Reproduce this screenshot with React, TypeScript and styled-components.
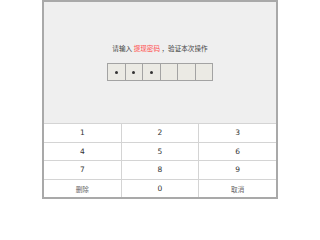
import React from "react";
import styled, { createGlobalStyle } from "styled-components";

const keys = ["1", "2", "3", "4", "5", "6", "7", "8", "9", "删除", "0", "取消"];

const App = () => {
  const filled = 3;

  return (
    <>
      <GlobalStyle />
      <StyledPanel>
        <StyledTop>
          <StyledPrompt>
            请输入 <StyledRed>提现密码</StyledRed> ，验证本次操作
          </StyledPrompt>
          <StyledBoxes>
            {[0, 1, 2, 3, 4, 5].map((i) => (
              <StyledBox key={i}>{i < filled && <StyledDot />}</StyledBox>
            ))}
          </StyledBoxes>
        </StyledTop>
        <StyledKeypad>
          {keys.map((k) => (
            <StyledKey key={k} $muted={k.length > 1}>
              {k}
            </StyledKey>
          ))}
        </StyledKeypad>
      </StyledPanel>
    </>
  );
};

const GlobalStyle = createGlobalStyle`
  html, body {
    margin: 0;
    padding: 0;
    background: #ffffff;
    font-family: "DejaVu Sans", "Noto Sans CJK SC", sans-serif;
  }
`;

const StyledPanel = styled.div`
  width: 236px;
  box-sizing: border-box;
  margin: 0 auto;
  border: 2px solid #a9a9a9;
  background: #efefef;
`;

const StyledTop = styled.div`
  height: 121px;
  box-sizing: border-box;
  padding-top: 42px;
  display: flex;
  flex-direction: column;
  align-items: center;
`;

const StyledPrompt = styled.div`
  font-family: "Noto Sans CJK SC", sans-serif;
  font-size: 6.6px;
  line-height: 9px;
  color: #444;
  white-space: pre;
`;

const StyledRed = styled.span`
  color: #ff4a4a;
`;

const StyledBoxes = styled.div`
  margin-top: 10px;
  width: 106px;
  height: 18px;
  box-sizing: border-box;
  display: flex;
  border: 1px solid #a3a3a3;
  background: #ebeae4;
`;

const StyledBox = styled.div`
  flex: 1;
  display: flex;
  align-items: center;
  justify-content: center;
  & + & {
    border-left: 1px solid #a3a3a3;
  }
`;

const StyledDot = styled.span`
  width: 3px;
  height: 3px;
  border-radius: 50%;
  background: #333;
`;

const StyledKeypad = styled.div`
  display: grid;
  grid-template-columns: repeat(3, 1fr);
  grid-auto-rows: 17.6px;
  gap: 1px;
  padding-top: 1px;
  background: #d4d4d4;
`;

const StyledKey = styled.div<{ $muted?: boolean }>`
  background: #ffffff;
  display: flex;
  align-items: center;
  justify-content: center;
  font-family: ${(p) =>
    p.$muted ? `"Noto Sans CJK SC", sans-serif` : `"DejaVu Sans", sans-serif`};
  font-size: ${(p) => (p.$muted ? "6.6px" : "7.5px")};
  color: ${(p) => (p.$muted ? "#666" : "#333")};
`;

export default App;
